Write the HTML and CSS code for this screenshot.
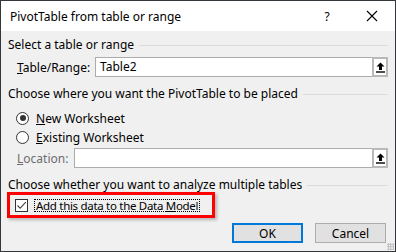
FILE: index.html
```html
<!DOCTYPE html>
<html>
<head>
<meta charset="utf-8">
<link rel="stylesheet" href="styles.css">
</head>
<body>
<div class="window">
  <div class="titlebar">
    <span class="title">PivotTable from table or range</span>
    <span class="help">?</span>
    <span class="close"><svg width="12" height="12" viewBox="0 0 12 12"><path d="M1 1L11 11M11 1L1 11" stroke="#000" stroke-width="1.1" fill="none"/></svg></span>
  </div>
  <div class="content">
    <div class="heading h1"><span>Select a table or range</span><i class="rule"></i></div>
    <div class="field f1">
      <span class="label"><u>T</u>able/Range:</span>
      <div class="input"><span class="val">Table2</span><span class="pick"><svg width="11" height="11" viewBox="0 0 11 11"><path d="M5.5 0.5L1.5 4.5H4V8H7V4.5H9.5Z" fill="#000"/><rect x="1" y="9.3" width="9" height="1.4" fill="#000"/></svg></span></div>
    </div>
    <div class="heading h2"><span>Choose where you want the PivotTable to be placed</span><i class="rule"></i></div>
    <div class="radio r1"><span class="circle on"></span><span class="rl"><u>N</u>ew Worksheet</span></div>
    <div class="radio r2"><span class="circle"></span><span class="rl"><u>E</u>xisting Worksheet</span></div>
    <div class="field f2">
      <span class="label dis"><u>L</u>ocation:</span>
      <div class="input"><span class="val"></span><span class="pick"><svg width="11" height="11" viewBox="0 0 11 11"><path d="M5.5 0.5L1.5 4.5H4V8H7V4.5H9.5Z" fill="#000"/><rect x="1" y="9.3" width="9" height="1.4" fill="#000"/></svg></span></div>
    </div>
    <div class="heading h3"><span>Choose whether you want to analyze multiple tables</span><i class="rule"></i></div>
    <div class="highlight">
      <span class="check"><svg width="11" height="11" viewBox="0 0 11 11"><path d="M1.5 5.5L4.2 8.2L9.8 2.2" stroke="#444" stroke-width="1.1" fill="none"/></svg></span>
      <span class="cl">Add this data to the Data <u>M</u>odel</span>
    </div>
    <div class="buttons">
      <button class="btn ok">OK</button>
      <button class="btn">Cancel</button>
    </div>
  </div>
  <div class="grip"></div>
</div>
</body>
</html>
```
FILE: styles.css
```css
html, body { margin: 0; padding: 0; background: #f0f0f0; }
body { font-family: "Noto Sans", "Open Sans", sans-serif; font-size: 12px; color: #000; }
.window {
  width: 396px; height: 252px; box-sizing: border-box;
  border: 1px solid #32373c; background: #f0f0f0;
  display: flex; flex-direction: column; position: relative;
}
.titlebar {
  height: 30px; background: #fff; display: flex; align-items: center;
  padding-left: 9px; flex: none;
}
.title { flex: 1; font-size: 12px; }
.help { width: 12px; text-align: center; margin-right: 33px; font-size: 12px; }
.close { width: 12px; height: 12px; display: flex; margin-right: 17px; }
.content { padding: 0 7px 0 7px; display: flex; flex-direction: column; }
.heading { display: flex; align-items: center; height: 16px; line-height: 16px; }
.heading span { white-space: nowrap; }
.heading .rule { flex: 1; height: 1px; background: #dcdcdc; margin-left: 5px; }
.h1 { margin-top: 6px; }
.h2 { margin-top: 9px; }
.h3 { margin-top: 9px; }
.field { display: flex; align-items: center; height: 20px; }
.f1 { margin-top: 4px; }
.f2 { margin-top: 3px; }
.label { padding-left: 9px; width: 78px; flex: none; }
.f2 .label { width: 57px; }
.label.dis { color: #6d6d6d; }
.input {
  flex: 1; height: 20px; box-sizing: border-box; border: 1px solid #acacac;
  background: #fff; display: flex; align-items: stretch;
}
.val { flex: 1; padding-left: 4px; line-height: 18px; }
.pick {
  width: 16px; box-sizing: border-box; border: 2px solid #b9b9b9;
  background: #fff; display: flex; align-items: center; justify-content: center;
  margin: -1px -1px -1px 0;
}
.radio { display: flex; align-items: center; height: 16px; padding-left: 8px; }
.r1 { margin-top: 8px; }
.r2 { margin-top: 3px; }
.circle {
  width: 13px; height: 13px; box-sizing: border-box; border: 1px solid #333;
  border-radius: 50%; background: #fff; flex: none; position: relative;
}
.circle.on::after {
  content: ""; position: absolute; left: 2.5px; top: 2.5px; width: 6px; height: 6px;
  border-radius: 50%; background: #333;
}
.rl { margin-left: 7px; }
.highlight {
  margin-top: -1px; margin-left: -1px; width: 208px; height: 26px; box-sizing: border-box;
  border: 3px solid #f00; display: flex; align-items: center; padding-left: 5px;
  box-shadow: 2px 2px 3px rgba(0,0,0,0.25);
}
.check {
  width: 13px; height: 13px; box-sizing: border-box; border: 1px solid #333; background: #fff;
  display: flex; align-items: center; justify-content: center; flex: none;
}
.cl {
  margin-left: 6px; border: 1px dotted #000; padding: 0 1px;
  display: block; white-space: nowrap; box-sizing: border-box;
  height: 13px; line-height: 11px; font-size: 11.5px; letter-spacing: -0.3px;
}
.buttons { display: flex; justify-content: flex-end; gap: 12px; margin-top: 5px; padding-right: 2px; }
.btn {
  width: 71px; height: 20px; box-sizing: border-box; border: 1px solid #adadad; background: #e1e1e1;
  font-family: inherit; font-size: 12px; color: #000; padding: 0;
}
.btn.ok { border: 2px solid #0078d7; }
.grip {
  position: absolute; right: 1px; bottom: 1px; width: 7px; height: 7px;
  background-image: radial-gradient(circle, #b0b0b0 0.8px, transparent 1px);
  background-size: 2.5px 2.5px;
}
```
